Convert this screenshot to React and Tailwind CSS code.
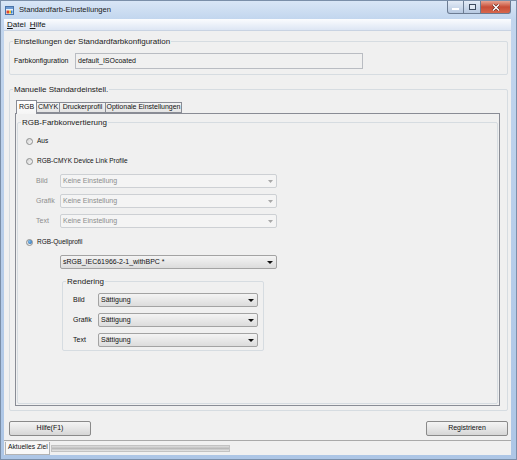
import { useState } from 'react'

const tabs = ['RGB', 'CMYK', 'Druckerprofil', 'Optionale Einstellungen']

const tabWidths = {
  RGB: 'w-[21px]',
  CMYK: 'w-[24px]',
  Druckerprofil: 'w-[47px]',
  'Optionale Einstellungen': 'w-[77px]',
}

function Arrow({ disabled }) {
  return disabled ? (
    <svg width="5" height="3" viewBox="0 0 5 3" className="shrink-0">
      <path d="M0 0h5L2.5 3z" fill="#a8a8a8" />
    </svg>
  ) : (
    <svg width="6" height="3" viewBox="0 0 6 3" className="shrink-0">
      <path d="M0 0h6L3 3z" fill="#111" />
    </svg>
  )
}

function Combo({ value, width, disabled }) {
  if (disabled) {
    return (
      <div
        className={`flex h-[14px] items-center justify-between rounded-[2px] border border-[#cdd0d4] bg-[#f4f4f4] pl-[2px] pr-[3px] text-[7px] text-[#8c8c8c] ${width}`}
      >
        <span>{value}</span>
        <Arrow disabled />
      </div>
    )
  }

  return (
    <div
      className={`flex h-[14px] items-center justify-between rounded-[2px] border border-[#a3a3a3] bg-linear-to-b from-[#f4f4f4] to-[#dcdcdc] pl-[2px] pr-[3px] text-[7px] text-[#111] ${width}`}
    >
      <span>{value}</span>
      <Arrow />
    </div>
  )
}

function Radio({ checked, label, onClick }) {
  return (
    <button type="button" onClick={onClick} className="flex h-[20px] items-center gap-[4px] pl-[5px]">
      <span className="flex size-[7px] items-center justify-center rounded-full border border-[#8e8f8f] bg-linear-to-br from-[#d3d3d3] to-[#f7f7f7]">
        {checked ? (
          <span className="size-[4px] rounded-full bg-[radial-gradient(circle_at_40%_40%,#7cc0f2,#17559f)]" />
        ) : null}
      </span>
      <span className="text-[6.5px] text-[#111]">{label}</span>
    </button>
  )
}

function Group({ title, className, children }) {
  return (
    <fieldset className={`rounded-[2px] border border-[#d6dce1] px-[3px] ${className}`}>
      <legend className="px-[1px] text-[8px] leading-[10px] text-[#1a1a1a]">
        <span className="relative top-[1px]">{title}</span>
      </legend>
      {children}
    </fieldset>
  )
}

function WinButton({ children, className }) {
  return (
    <div className={`flex h-[13px] items-center justify-center border border-t-0 border-[#6c7c93] ${className}`}>
      {children}
    </div>
  )
}

export default function App() {
  const [activeTab, setActiveTab] = useState('RGB')
  const [mode, setMode] = useState('quelle')
  const deviceLink = mode === 'device'

  return (
    <div className="flex h-[460px] w-[517px] flex-col overflow-hidden border border-[#7b8fa9] bg-linear-to-b from-[#c3d6ee] to-[#adc6e6] font-['Liberation_Sans',Arial,sans-serif] text-[#111]">
      {/* title bar */}
      <div className="flex h-[18px] shrink-0 bg-linear-to-b from-[#d9e6f6] to-[#c2d6ee]">
        <div className="flex items-center">
          <svg width="9" height="9" viewBox="0 0 9 9" className="ml-[4px] mt-[1px]">
            <rect x="0.5" y="0.5" width="8" height="8" fill="#e9f1fb" stroke="#4a73a8" />
            <rect x="1" y="1" width="7" height="2" fill="#6d9bd3" />
            <rect x="1.5" y="4.5" width="2.5" height="3" fill="#e0452b" />
            <rect x="4" y="4.5" width="2" height="3" fill="#f2c12e" />
            <rect x="6" y="4.5" width="1.5" height="3" fill="#2f7fd0" />
          </svg>
          <span className="ml-[5px] text-[7.6px] text-[#1a1a1a]">Standardfarb-Einstellungen</span>
        </div>
        <div className="ml-auto mr-[5px] flex self-start">
          <WinButton className="w-[17px] rounded-bl-[3px] bg-linear-to-b from-[#e3ebf6] to-[#b7c9e1]">
            <span className="mt-[3px] h-[2px] w-[7px] border border-white bg-[#3d4b5f]" />
          </WinButton>
          <WinButton className="w-[17px] border-l-0 bg-linear-to-b from-[#e3ebf6] to-[#b7c9e1]">
            <span className="h-[6px] w-[7px] border border-[#3d4b5f] bg-white/40" />
          </WinButton>
          <WinButton className="w-[30px] rounded-br-[3px] border-l-0 bg-linear-to-b from-[#e6a493] via-[#c74d37] to-[#d8674c]">
            <svg width="8" height="7" viewBox="0 0 8 7">
              <path d="M1 0.5 7 6.5M7 0.5 1 6.5" stroke="#5a1d14" strokeWidth="2.6" />
              <path d="M1 0.5 7 6.5M7 0.5 1 6.5" stroke="#fff" strokeWidth="1.5" />
            </svg>
          </WinButton>
        </div>
      </div>

      {/* client area */}
      <div className="mb-[4px] ml-[3px] mr-[5px] flex flex-1 flex-col bg-[#f0f0f0]">
        <div className="flex h-[12px] shrink-0 items-center gap-[4px] border-b border-[#c9d3e2] bg-linear-to-b from-[#fbfcfe] to-[#dde6f4] pl-[3px] text-[8px]">
          <span>
            <span className="underline">D</span>atei
          </span>
          <span>
            <span className="underline">H</span>ilfe
          </span>
        </div>

        <Group title="Einstellungen der Standardfarbkonfiguration" className="ml-[5px] mr-[3px] mt-[5px] pb-[5px]">
          <div className="mt-[7px] flex items-center">
            <span className="ml-[1px] w-[61px] text-[7px]">Farbkonfiguration</span>
            <div className="flex h-[16px] w-[288px] items-center border border-[#b9bcc2] bg-[#f0f0f0] pl-[2px] text-[7px]">
              default_ISOcoated
            </div>
          </div>
        </Group>

        <Group title="Manuelle Standardeinstell." className="ml-[5px] mr-[3px] mt-[9px] pb-[4px]">
          <div className="ml-[2px] mt-[6px] flex h-[13px] items-end pl-[1px]">
            {tabs.map((tab) => {
              const isActive = tab === activeTab

              return (
                <button
                  key={tab}
                  type="button"
                  onClick={() => setActiveTab(tab)}
                  className={[
                    'relative flex items-center justify-center border border-[#898c95] text-[7px]',
                    tabWidths[tab],
                    isActive
                      ? 'z-10 -mb-px h-[14px] border-b-0 bg-linear-to-b from-white to-[#f5f5f5]'
                      : '-ml-px h-[11px] bg-linear-to-b from-[#f3f3f3] to-[#e4e4e4] first:ml-0',
                  ].join(' ')}
                >
                  {tab}
                </button>
              )
            })}
          </div>

          <div className="ml-[2px] flex h-[293px] w-[485px] flex-col border border-[#898c95] bg-[#f0f0f0]">
            <Group title="RGB-Farbkonvertierung" className="mx-[1px] mb-[1px] mt-[3px] flex-1">
              <div className="mt-[4px] flex flex-col items-start">
                <Radio label="Aus" checked={mode === 'aus'} onClick={() => setMode('aus')} />
                <Radio label="RGB-CMYK Device Link Profile" checked={deviceLink} onClick={() => setMode('device')} />
                {['Bild', 'Grafik', 'Text'].map((label) => (
                  <div key={label} className="flex h-[20px] items-center pl-[15px]">
                    <span className={`w-[24px] text-[7px] ${deviceLink ? 'text-[#111]' : 'text-[#8d8d8d]'}`}>
                      {label}
                    </span>
                    <Combo value="Keine Einstellung" width="w-[217px]" disabled={!deviceLink} />
                  </div>
                ))}
                <div className="mt-[1px]">
                  <Radio label="RGB-Quellprofil" checked={mode === 'quelle'} onClick={() => setMode('quelle')} />
                </div>
                <div className="flex h-[20px] items-center pl-[39px]">
                  <Combo value="sRGB_IEC61966-2-1_withBPC  *" width="w-[217px]" />
                </div>
              </div>

              <Group title="Rendering" className="ml-[41px] mt-[4px] w-[202px]">
                <div className="mt-[4px] flex flex-col">
                  {['Bild', 'Grafik', 'Text'].map((label) => (
                    <div key={label} className="flex h-[20px] items-center pl-[7px]">
                      <span className="w-[25px] text-[7px]">{label}</span>
                      <Combo value="Sättigung" width="w-[160px]" />
                    </div>
                  ))}
                </div>
              </Group>
            </Group>
          </div>
        </Group>

        <div className="ml-[5px] mr-[3px] mt-[10px] flex justify-between">
          <button
            type="button"
            className="h-[15px] w-[82px] rounded-[2px] border border-[#8a8a8a] bg-linear-to-b from-[#f4f4f4] via-[#e6e6e6] to-[#d6d6d6] text-[7px]"
          >
            Hilfe(F1)
          </button>
          <button
            type="button"
            className="h-[15px] w-[82px] rounded-[2px] border border-[#8a8a8a] bg-linear-to-b from-[#f4f4f4] via-[#e6e6e6] to-[#d6d6d6] text-[7px]"
          >
            Registrieren
          </button>
        </div>

        <div className="mt-auto flex h-[15px] items-center border-t border-[#a9a9a9]">
          <div className="ml-[1px] flex h-[13px] w-[45px] items-center border border-t-0 border-[#b3b3b3] bg-[#f8f8f8] pl-[2px] text-[6.7px]">
            Aktuelles Ziel
          </div>
          <div className="ml-[1px] h-[7px] w-[179px] border border-[#c2c2c2] bg-linear-to-b from-[#dedede] via-[#b9b9b9] to-[#e8e8e8]" />
        </div>
      </div>
    </div>
  )
}
